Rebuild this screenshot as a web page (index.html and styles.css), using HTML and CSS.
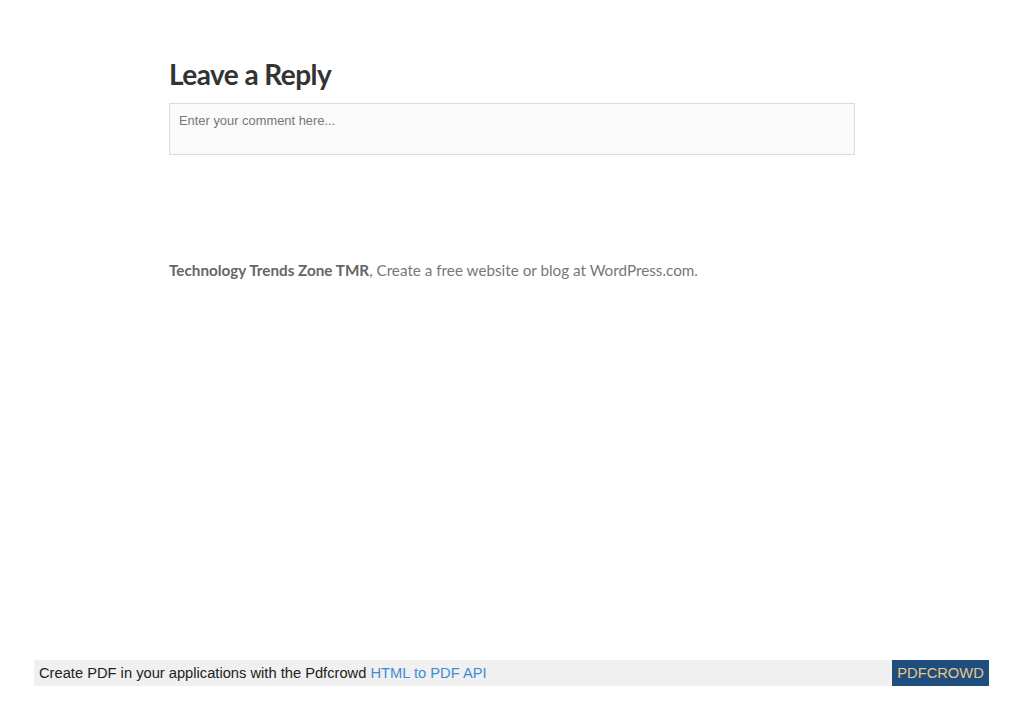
FILE: index.html
```html
<!DOCTYPE html>
<html>
<head>
<meta charset="utf-8">
<link rel="stylesheet" href="styles.css">
</head>
<body>
<div class="page">
  <main class="content">
    <section class="reply">
      <h3 class="reply-title">Leave a Reply</h3>
      <div class="comment-box">Enter your comment here...</div>
    </section>
    <footer class="site-footer">
      <strong>Technology Trends Zone TMR</strong>, Create a free website or blog at WordPress.com.
    </footer>
  </main>
  <div class="pdf-bar">
    <div class="pdf-text">Create PDF in your applications with the Pdfcrowd <span class="pdf-link">HTML to PDF API</span></div>
    <div class="pdf-brand">PDFCROWD</div>
  </div>
</div>
</body>
</html>
```
FILE: styles.css
```css
html, body { margin: 0; padding: 0; background: #fff; }
.page {
  width: 1023px;
  height: 724px;
  display: flex;
  flex-direction: column;
}
.content {
  flex: 1;
  padding: 56px 0 0 169px;
  width: 686px;
}
.reply-title {
  margin: 0;
  font-family: "Lato", "Open Sans", sans-serif;
  font-weight: 700;
  font-size: 28px;
  line-height: 36px;
  color: #333;
  letter-spacing: -0.55px;
}
.comment-box {
  margin-top: 11px;
  height: 50px;
  border: 1px solid #dcdcdc;
  background: #fafafa;
  box-sizing: content-box;
  padding: 0 9px;
  font-family: "Liberation Sans", Arial, sans-serif;
  font-size: 12.9px;
  line-height: 34px;
  color: #777;
}
.site-footer {
  margin-top: 104px;
  font-family: "Lato", "Open Sans", sans-serif;
  font-size: 15.25px;
  line-height: 22px;
  color: #777;
}
.site-footer strong { color: #666; font-weight: 700; }
.pdf-bar {
  margin: 0 34px 38px 34px;
  height: 26px;
  display: flex;
  background: #f0f0f0;
  font-family: "Liberation Sans", Arial, sans-serif;
  font-size: 14.7px;
}
.pdf-text {
  flex: 1;
  padding-left: 5px;
  line-height: 26px;
  color: #222;
}
.pdf-link { color: #3d8bd4; }
.pdf-brand {
  width: 97px;
  background: #1f4e7e;
  color: #e6c98a;
  text-align: center;
  line-height: 26px;
}
```
